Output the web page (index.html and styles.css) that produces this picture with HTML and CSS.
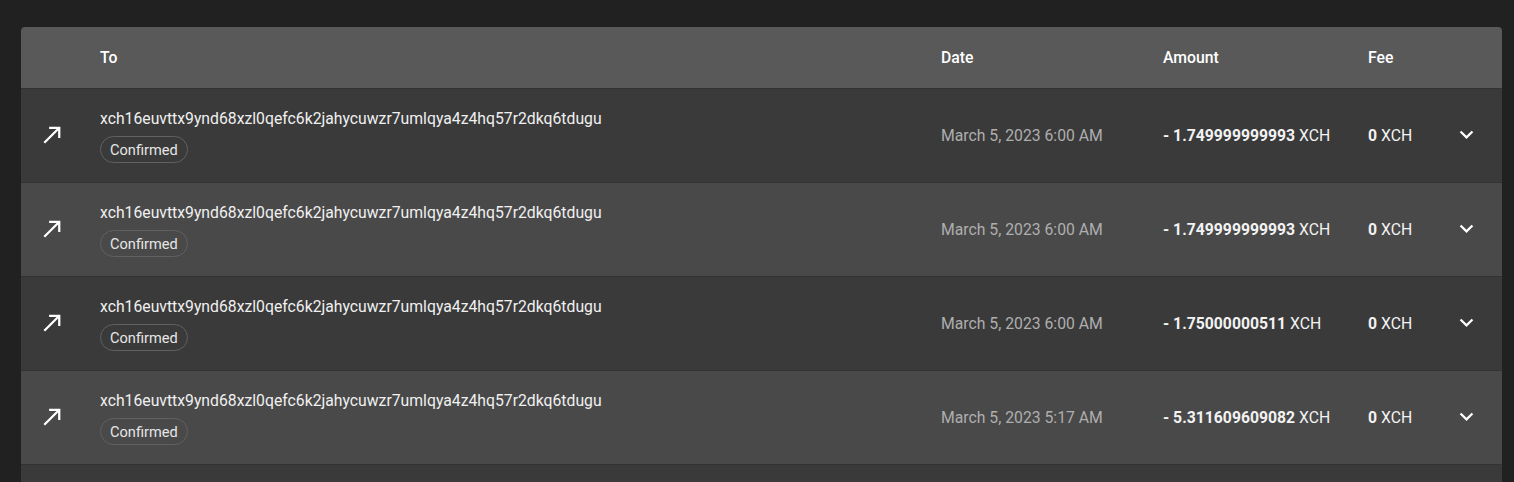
FILE: index.html
```html
<!DOCTYPE html>
<html lang="en">
<head>
<meta charset="utf-8">
<title>Transactions</title>
<link rel="stylesheet" href="styles.css">
</head>
<body>
<div class="page">
  <div class="card">
    <div class="row head">
      <div class="cell"></div>
      <div class="cell">To</div>
      <div class="cell">Date</div>
      <div class="cell">Amount</div>
      <div class="cell">Fee</div>
      <div class="cell"></div>
    </div>

    <div class="row dark">
      <div class="cell icon"><svg viewBox="0 0 24 24" width="27" height="27"><path d="M9 5v2h6.59L4 18.59 5.41 20 17 8.41V15h2V5z"/></svg></div>
      <div class="cell to">
        <div class="addr">xch16euvttx9ynd68xzl0qefc6k2jahycuwzr7umlqya4z4hq57r2dkq6tdugu</div>
        <span class="chip">Confirmed</span>
      </div>
      <div class="cell date">March 5, 2023 6:00 AM</div>
      <div class="cell amount"><strong>- 1.749999999993</strong> XCH</div>
      <div class="cell fee"><strong>0</strong> XCH</div>
      <div class="cell more"><svg viewBox="0 0 24 24" width="27" height="27"><path d="M16.59 8.59 12 13.17 7.41 8.59 6 10l6 6 6-6z"/></svg></div>
    </div>

    <div class="row light">
      <div class="cell icon"><svg viewBox="0 0 24 24" width="27" height="27"><path d="M9 5v2h6.59L4 18.59 5.41 20 17 8.41V15h2V5z"/></svg></div>
      <div class="cell to">
        <div class="addr">xch16euvttx9ynd68xzl0qefc6k2jahycuwzr7umlqya4z4hq57r2dkq6tdugu</div>
        <span class="chip">Confirmed</span>
      </div>
      <div class="cell date">March 5, 2023 6:00 AM</div>
      <div class="cell amount"><strong>- 1.749999999993</strong> XCH</div>
      <div class="cell fee"><strong>0</strong> XCH</div>
      <div class="cell more"><svg viewBox="0 0 24 24" width="27" height="27"><path d="M16.59 8.59 12 13.17 7.41 8.59 6 10l6 6 6-6z"/></svg></div>
    </div>

    <div class="row dark">
      <div class="cell icon"><svg viewBox="0 0 24 24" width="27" height="27"><path d="M9 5v2h6.59L4 18.59 5.41 20 17 8.41V15h2V5z"/></svg></div>
      <div class="cell to">
        <div class="addr">xch16euvttx9ynd68xzl0qefc6k2jahycuwzr7umlqya4z4hq57r2dkq6tdugu</div>
        <span class="chip">Confirmed</span>
      </div>
      <div class="cell date">March 5, 2023 6:00 AM</div>
      <div class="cell amount"><strong>- 1.75000000511</strong> XCH</div>
      <div class="cell fee"><strong>0</strong> XCH</div>
      <div class="cell more"><svg viewBox="0 0 24 24" width="27" height="27"><path d="M16.59 8.59 12 13.17 7.41 8.59 6 10l6 6 6-6z"/></svg></div>
    </div>

    <div class="row light">
      <div class="cell icon"><svg viewBox="0 0 24 24" width="27" height="27"><path d="M9 5v2h6.59L4 18.59 5.41 20 17 8.41V15h2V5z"/></svg></div>
      <div class="cell to">
        <div class="addr">xch16euvttx9ynd68xzl0qefc6k2jahycuwzr7umlqya4z4hq57r2dkq6tdugu</div>
        <span class="chip">Confirmed</span>
      </div>
      <div class="cell date">March 5, 2023 5:17 AM</div>
      <div class="cell amount"><strong>- 5.311609609082</strong> XCH</div>
      <div class="cell fee"><strong>0</strong> XCH</div>
      <div class="cell more"><svg viewBox="0 0 24 24" width="27" height="27"><path d="M16.59 8.59 12 13.17 7.41 8.59 6 10l6 6 6-6z"/></svg></div>
    </div>

    <div class="row dark">
      <div class="cell icon"></div>
      <div class="cell to"></div>
      <div class="cell"></div>
      <div class="cell"></div>
      <div class="cell"></div>
      <div class="cell"></div>
    </div>
  </div>
</div>
</body>
</html>
```

FILE: styles.css
```css
* { box-sizing: border-box; }

html, body {
  margin: 0;
  padding: 0;
  background: #212121;
  height: 100%;
  overflow: hidden;
}

body {
  font-family: Roboto, "Liberation Sans", sans-serif;
  color: #ffffff;
  font-size: 15.75px;
}

.page {
  padding: 27px 12px 0 21px;
}

.card {
  border-radius: 4px 4px 0 0;
  overflow: hidden;
}

.row {
  display: grid;
  grid-template-columns: 79px 841px 222px 205px 72px 1fr;
  align-items: center;
  border-bottom: 1px solid #333333;
}

.head {
  height: 62px;
  background: #595959;
  font-weight: 500;
  padding-top: 1px;
}

.dark {
  height: 94px;
  background: #3a3a3a;
}

.light {
  height: 94px;
  background: #494949;
}

.cell {
  line-height: 22px;
}

.icon {
  padding-left: 17.5px;
  padding-bottom: 2px;
  display: flex;
  align-items: center;
}

.icon svg,
.more svg {
  fill: #ffffff;
  display: block;
}

.to {
  display: flex;
  flex-direction: column;
  align-items: flex-start;
  gap: 6px;
}

.addr {
  color: #f0f0f0;
}

.chip {
  display: inline-flex;
  align-items: center;
  height: 27px;
  padding: 0 9px;
  border: 1px solid #616161;
  border-radius: 14px;
  font-size: 14.6px;
  color: #e6e6e6;
}

.date {
  color: #aeaeae;
}

.amount strong,
.fee strong {
  font-weight: 700;
}

.amount,
.fee {
  color: #f2f2f2;
}

.more {
  display: flex;
  align-items: center;
  padding-left: 12.5px;
  padding-bottom: 3px;
}
```
